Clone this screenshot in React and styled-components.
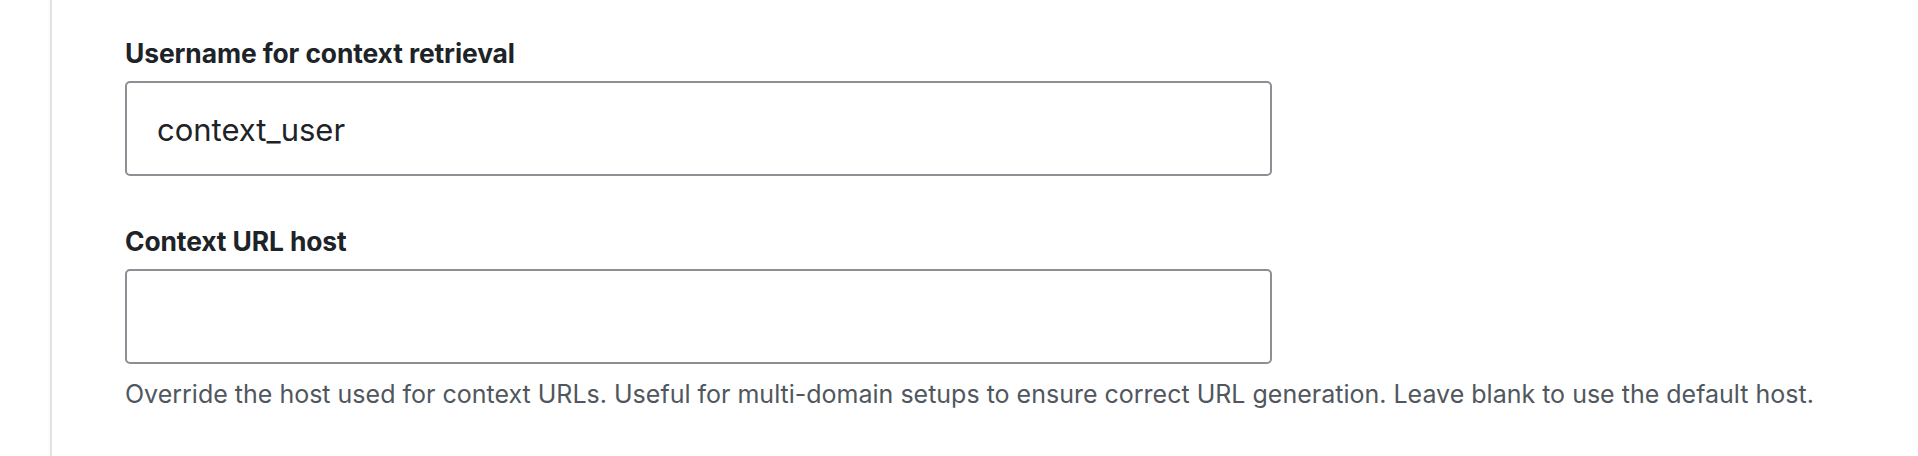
import React from "react";
import styled, { createGlobalStyle } from "styled-components";

const Global = createGlobalStyle`
  html, body { margin: 0; padding: 0; background: #ffffff; }
  body { font-family: Inter, "Noto Sans", sans-serif; }
`;

const Page = styled.div`
  height: 456px;
  padding-left: 50px;
  box-sizing: border-box;
  overflow: hidden;
`;

const Panel = styled.div`
  height: 100%;
  border-left: 2px solid #e2e2e8;
  box-shadow: -1px 0 2px rgba(0, 0, 0, 0.03);
  padding: 36px 0 0 73px;
  box-sizing: border-box;
`;

const Field = styled.div`
  display: flex;
  flex-direction: column;
  width: 1147px;
  margin-bottom: ${(p) => p.$gap || 0}px;
`;

const Label = styled.label`
  font-size: 26.4px;
  line-height: 34px;
  font-weight: 700;
  color: #1d2327;
  letter-spacing: -0.1px;
  margin-bottom: 11px;
`;

const Input = styled.input`
  box-sizing: border-box;
  width: 100%;
  height: 95px;
  border: 2px solid #8c8f94;
  border-radius: 5px;
  padding: 2px 30px 0;
  font-family: Inter, "Noto Sans", sans-serif;
  font-size: 31px;
  color: #1d2327;
  background: #ffffff;
  outline: none;
`;

const Help = styled.p`
  margin: 14px 0 0;
  font-size: 25px;
  line-height: 32px;
  color: #50575e;
  white-space: nowrap;
`;

export default function App() {
  return (
    <>
      <Global />
      <Page>
        <Panel>
          <Field $gap={48}>
            <Label htmlFor="ctx-user">Username for context retrieval</Label>
            <Input id="ctx-user" defaultValue="context_user" />
          </Field>
          <Field>
            <Label htmlFor="ctx-host">Context URL host</Label>
            <Input id="ctx-host" defaultValue="" />
            <Help>
              Override the host used for context URLs. Useful for multi-domain setups to ensure correct URL generation. Leave blank to use the default host.
            </Help>
          </Field>
        </Panel>
      </Page>
    </>
  );
}
